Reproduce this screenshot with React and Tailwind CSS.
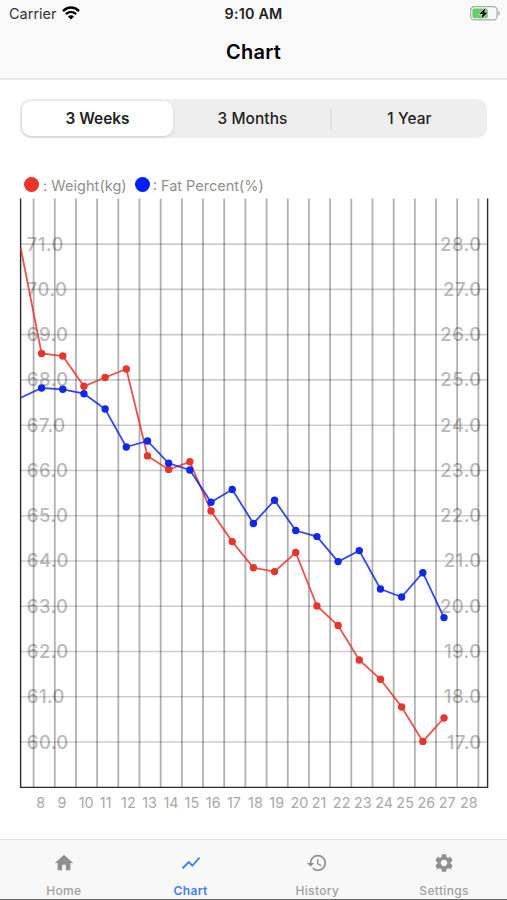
import { MdHistory, MdHome, MdSettings, MdShowChart } from 'react-icons/md';
import { clsx } from 'clsx';

const STEP = 21.18;
const ROW = 45.27;

// y positions inside the plot, one per day; the first point sits on the left axis
const weight = [
  50, 155.5, 158, 188.3, 179.5, 171, 257.9, 271.5, 263.8, 313, 343.6,
  369.7, 373.6, 354.5, 408, 427.5, 462, 481.3, 509, 543.4, 520
];
const fat = [
  199.7, 190, 191.3, 195.7, 211, 249, 243, 265.3, 272, 304.3, 291.5,
  325.5, 302.3, 332.5, 338.6, 363.6, 352.6, 391, 399, 374.7, 419.6
];

const rows = Array.from({ length: 12 }, (_, i) => ({
  y: 46.1 + i * ROW,
  left: (71 - i).toFixed(1),
  right: (28 - i).toFixed(1)
}));

const columns = Array.from({ length: 22 }, (_, i) => 33.6 + i * STEP);
const days = Array.from({ length: 21 }, (_, i) => i + 8);

const ranges = ['3 Weeks', '3 Months', '1 Year'];

const tabs = [
  { id: 'Home', icon: MdHome },
  { id: 'Chart', icon: MdShowChart },
  { id: 'History', icon: MdHistory },
  { id: 'Settings', icon: MdSettings }
];

function WifiIcon() {
  return (
    <svg width="18" height="14" viewBox="0 0 18 14" fill="none" stroke="#000" strokeWidth="2.5" className="-translate-x-px -translate-y-px">
      <path d="M1 5.2 C5.6 0.4 12.4 0.4 17 5.2" />
      <path d="M3.9 8.2 C6.9 5.2 11.1 5.2 14.1 8.2" />
      <path d="M9 13.6 L5.9 10.5 C7.6 8.9 10.4 8.9 12.1 10.5 Z" fill="#000" stroke="none" />
    </svg>
  );
}

function BatteryIcon() {
  return (
    <svg width="31" height="15" viewBox="0 0 31 15" className="-translate-y-px">
      <rect x="0.7" y="0.7" width="26.4" height="13.2" rx="3.6" fill="none" stroke="#a9a9a9" strokeWidth="1.2" />
      <path d="M28.4 5 C30.4 5.6 30.4 9 28.4 9.6 Z" fill="#a9a9a9" />
      <rect x="2.4" y="2.4" width="15.4" height="9.8" rx="2" fill="#65ce6b" />
      <path d="M15.6 1.9 L9.2 8.1 H12.7 L11.3 12.8 L17.7 6.5 H14.2 Z" fill="#000" stroke="#dff3e0" strokeWidth="1.2" paintOrder="stroke" />
    </svg>
  );
}

function Series({ values, color }) {
  const points = values.map((y, i) => [i === 0 ? 20.7 : 20.4 + i * STEP, y]);

  return (
    <g>
      <polyline
        points={points.map(p => p.join(',')).join(' ')}
        fill="none"
        stroke={color}
        strokeWidth="1.8"
        strokeOpacity="0.85"
      />
      {points.slice(1).map(([x, y]) => (
        <circle key={x} cx={x} cy={y} r="3.7" fill={color} />
      ))}
    </g>
  );
}

function Chart() {
  return (
    <svg width="507" height="616" viewBox="0 0 507 616" className="block">
      {/* Axis values */}
      <g fill="#bababa" fontSize="18.5" fontWeight="500" letterSpacing="0.45">
        {rows.map(row => (
          <g key={row.left}>
            <text x="26.8" y={row.y + 6.5}>{row.left}</text>
            <text x="481.6" y={row.y + 6.5} textAnchor="end">{row.right}</text>
          </g>
        ))}
      </g>

      {/* Grid */}
      <g stroke="#000">
        {rows.map(row => (
          <line key={row.y} x1="20" x2="487" y1={row.y} y2={row.y} strokeWidth="1.6" strokeOpacity="0.2" />
        ))}
        {columns.map(x => (
          <line key={x} x1={x} x2={x} y1="0.5" y2="589" strokeWidth="1.8" strokeOpacity="0.31" />
        ))}
      </g>
      <path d="M20.6 0.5 V589.4 H487.6 V0.5" fill="none" stroke="#2b2b2d" strokeWidth="1.4" />

      <Series values={weight} color="#e6352b" />
      <Series values={fat} color="#1128e8" />

      {/* Days */}
      <g fill="#a8a8a8" fontSize="14.3" letterSpacing="0.1">
        {days.map((day, i) => (
          <text key={day} x={36.3 + i * STEP} y="610">{day}</text>
        ))}
      </g>
    </svg>
  );
}

export default function App() {
  return (
    <div className="flex flex-col w-[507px] h-[900px] overflow-hidden bg-white text-black font-[Inter,Roboto,sans-serif]">
      {/* Header */}
      <header className="h-20 shrink-0 bg-[#f9f9f9] border-b-2 border-[#e8e8e8]">
        <div className="grid grid-cols-3 items-center h-7 pl-[9px] pr-[6px] text-sm">
          <div className="flex items-center gap-[6px] text-[#333]">
            <span className="text-[14.5px]">Carrier</span>
            <WifiIcon />
          </div>
          <div className="-ml-[3px] text-center font-semibold text-[#222] text-[14.3px] tracking-[0.2px]">9:10 AM</div>
          <div className="flex justify-end"><BatteryIcon /></div>
        </div>
        <h1 className="mt-[8px] text-center text-[20px] leading-8 font-semibold tracking-[0.2px]">Chart</h1>
      </header>

      {/* Range switch */}
      <div className="mt-[19px] ml-[20px] w-[467px] h-[39px] shrink-0 flex items-center rounded-[10px] bg-[#eeeeee] p-[2px] text-[15.4px] text-[#222]">
        {ranges.map((range, i) => (
          <div
            key={range}
            className={clsx(
              'flex items-center justify-center',
              i === 0 && 'w-[151px] h-[35px] rounded-[9px] bg-white font-semibold shadow-[0_1px_3px_rgba(0,0,0,0.15)]',
              i === 1 && 'w-[159px] h-[22px] pl-[2px] border-r-2 border-[#e0e0e0] font-medium tracking-[0.1px]',
              i === 2 && 'flex-1 pl-[2px] font-medium tracking-[0.1px]'
            )}
          >
            {range}
          </div>
        ))}
      </div>

      {/* Legend */}
      <div className="mt-[36px] mb-px pl-6 h-[23px] shrink-0 flex items-center text-[14.5px] text-[#8e8e8e]">
        <span className="w-[15px] h-[15px] mb-[3px] rounded-full bg-[#e93427]"></span>
        <span className="ml-[4px] tracking-[0.05px]">: Weight(kg)</span>
        <span className="ml-[8px] w-[15px] h-[15px] mb-[3px] rounded-full bg-[#001eff]"></span>
        <span className="ml-[3px]">: Fat Percent(%)</span>
      </div>

      <Chart />

      {/* Tab bar */}
      <nav className="mt-auto h-[61px] shrink-0 grid grid-cols-4 bg-[#f8f8f8] border-t border-[#dedede] border-b border-b-[#666]">
        {tabs.map(tab => (
          <div
            key={tab.id}
            className={clsx(
              'flex flex-col items-center pt-[12px] pl-px',
              tab.id === 'Chart' ? 'text-[#3b82f0]' : 'text-[#a0a0a0]'
            )}
          >
            <tab.icon className={clsx('size-[22px]', tab.id !== 'Chart' && 'text-[#909090]')} />
            <span className={clsx('mt-[9px] text-[12px] leading-4 tracking-[0.35px]', tab.id === 'Chart' ? 'font-semibold' : 'font-medium')}>
              {tab.id}
            </span>
          </div>
        ))}
      </nav>
    </div>
  );
}
